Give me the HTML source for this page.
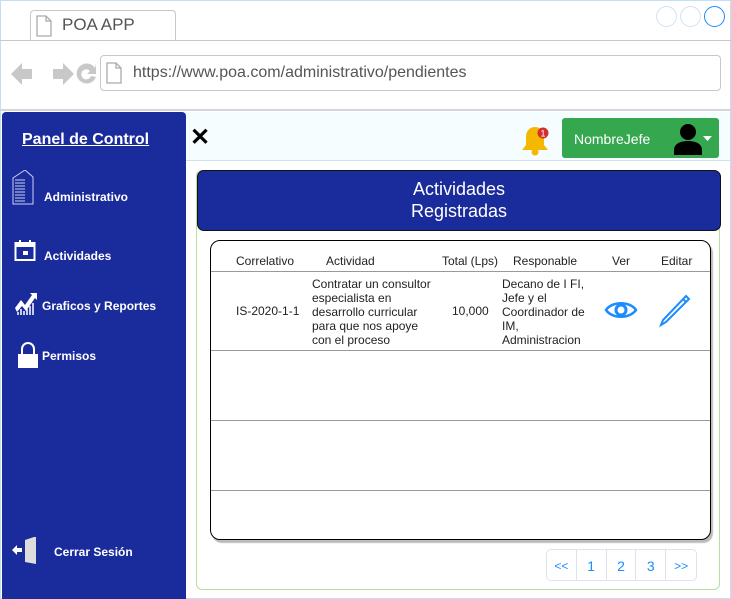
<!DOCTYPE html>
<html><head><meta charset="utf-8"><style>
*{margin:0;padding:0;box-sizing:border-box}
body{width:731px;height:599px;position:relative;background:#fff;font-family:"Liberation Sans",sans-serif;overflow:hidden}
.a{position:absolute}
.frame{left:0;top:0;width:731px;height:599px;border:1px solid #bfe0f5}
.side{left:2px;top:112px;width:184px;height:487px;background:#1a2b9b;border-radius:4px 4px 0 0}
.nav{color:#fff;font-weight:bold;font-size:12px}
.c{font-size:12px;color:#222}
</style></head><body>
<div class="a frame"></div>
<div class="a" style="left:30px;top:10px;width:146px;height:31px;border:1px solid #c8c8c8;border-bottom:none;border-radius:4px 4px 0 0;background:#fff"></div>
<div class="a" style="left:0;top:40px;width:731px;height:1px;background:#c8c8c8"></div>
<svg class="a" style="left:36px;top:15px" width="16" height="22"><path d="M1 1h9l5 5v15H1z M10 1v5h5" fill="#fff" stroke="#aaa" stroke-width="1.3"/></svg>
<div class="a" style="left:62px;top:15px;font-size:17px;color:#555">POA APP</div>
<div class="a" style="left:656px;top:6px;width:21px;height:21px;border:1px solid #cfe3f5;border-radius:50%"></div>
<div class="a" style="left:680px;top:6px;width:21px;height:21px;border:1px solid #cfe3f5;border-radius:50%"></div>
<div class="a" style="left:704px;top:6px;width:21px;height:21px;border:1.5px solid #1a8cff;border-radius:50%"></div>
<svg class="a" style="left:10px;top:60px" width="88" height="28"><path d="M1 14L12 3v6h10v10H12v6z" fill="#c8c8c8"/><path d="M64 14L53 3v6H43v10h10v6z" fill="#c8c8c8"/><path d="M85 8a10 10 0 1 0 1 9l-5-1a5 5 0 1 1-1-5l-3 3h9V4z" fill="#c8c8c8"/></svg>
<div class="a" style="left:100px;top:55px;width:621px;height:36px;border:1px solid #c8c8c8;border-radius:4px"></div>
<svg class="a" style="left:106px;top:62px" width="16" height="22"><path d="M1 1h9l5 5v15H1z M10 1v5h5" fill="#fff" stroke="#aaa" stroke-width="1.3"/></svg>
<div class="a" style="left:133px;top:64px;font-size:16px;color:#555">https://www.poa.com/administrativo/pendientes</div>
<div class="a" style="left:0;top:109px;width:731px;height:2px;background:#d0d6dc"></div>
<div class="a" style="left:186px;top:112px;width:544px;height:49px;background:#f5fdff;border-bottom:1px solid #c8e4f5"></div>
<div class="a" style="left:190px;top:125px;font-size:24px;font-weight:bold;line-height:26px">✕</div>
<svg class="a" style="left:519px;top:123px" width="34" height="34"><path d="M16 4c-6 0-9 5-9 10v8l-4 5h26l-4-5v-8c0-5-3-10-9-10z" fill="#f5b800"/><circle cx="16" cy="29" r="3.5" fill="#f5b800"/><circle cx="24" cy="10" r="5.5" fill="#d32f2f"/><text x="21.5" y="13.5" font-size="9" fill="#fff" font-family="Liberation Sans">1</text></svg>
<div class="a" style="left:562px;top:118px;width:157px;height:40px;background:#35a84f;border-radius:3px"></div>
<div class="a" style="left:574px;top:131px;color:#fff;font-size:14px">NombreJefe</div>
<svg class="a" style="left:672px;top:123px" width="44" height="32"><circle cx="16" cy="9" r="8" fill="#000"/><path d="M2 32v-5c0-6 6-9 14-9s14 3 14 9v5z" fill="#000"/><path d="M31 13h9l-4.5 5z" fill="#fff"/></svg>
<div class="a side"></div>
<div class="a" style="left:22px;top:131px;color:#fff;font-weight:bold;font-size:16px;text-decoration:underline">Panel de Control</div>
<svg class="a" style="left:11px;top:170px" width="24" height="36"><path d="M2 34V8l12-8 8 7v27z" fill="none" stroke="#c9d1f0" stroke-width="1"/><g stroke="#c9d1f0"><path d="M4 10h10M4 13h10M4 16h10M4 19h10M4 22h10M4 25h10M4 28h10M4 31h10"/></g></svg>
<div class="a nav" style="left:44px;top:190px">Administrativo</div>
<svg class="a" style="left:14px;top:239px" width="22" height="22"><rect x="1.5" y="4" width="19" height="17" fill="none" stroke="#fff" stroke-width="2"/><rect x="1.5" y="4" width="19" height="4" fill="#fff"/><path d="M6 1v5M16 1v5" stroke="#fff" stroke-width="2"/><rect x="9" y="12" width="5" height="4" fill="#fff"/></svg>
<div class="a nav" style="left:44px;top:249px">Actividades</div>
<svg class="a" style="left:14px;top:290px" width="24" height="26"><path d="M1 18l6-8 4 5 7-10-2-2h7v7l-2-2-9 13-4-5-5 6z" fill="#fff"/><path d="M4 25v-3M7 25v-6M10 25v-4M13 25v-6M16 25v-9M19 25v-12" stroke="#fff" stroke-width="1.5"/></svg>
<div class="a nav" style="left:42px;top:299px">Graficos y Reportes</div>
<svg class="a" style="left:17px;top:341px" width="22" height="28"><path d="M5 13V8a6 6 0 0 1 12 0v5" fill="none" stroke="#fff" stroke-width="2"/><rect x="1" y="13" width="20" height="14" fill="#fff"/></svg>
<div class="a nav" style="left:42px;top:349px">Permisos</div>
<svg class="a" style="left:10px;top:537px" width="30" height="28"><path d="M15 3l9-3h2v27l-11-2z" fill="#ddd"/><path d="M2 13l5-5v3h5v4H7v3z" fill="#fff"/></svg>
<div class="a nav" style="left:54px;top:545px">Cerrar Sesión</div>
<div class="a" style="left:196px;top:170px;width:524px;height:420px;border:1px solid #b7df9b;border-radius:6px"></div>
<div class="a" style="left:197px;top:170px;width:524px;height:61px;background:#1a2b9b;border:1px solid #111;border-radius:7px;color:#fff;text-align:center;font-size:18px;line-height:22px;padding-top:7px">Actividades<br>Registradas</div>
<div class="a" style="left:210px;top:240px;width:501px;height:300px;border:1px solid #000;border-radius:10px;box-shadow:2px 3px 1px #bbb;background:#fff"></div>
<div class="a" style="left:211px;top:271px;width:499px;height:1px;background:#999"></div>
<div class="a" style="left:211px;top:350px;width:499px;height:1px;background:#999"></div>
<div class="a" style="left:211px;top:420px;width:499px;height:1px;background:#999"></div>
<div class="a" style="left:211px;top:490px;width:499px;height:1px;background:#999"></div>
<div class="a c" style="left:236px;top:254px">Correlativo</div>
<div class="a c" style="left:326px;top:254px">Actividad</div>
<div class="a c" style="left:442px;top:254px">Total (Lps)</div>
<div class="a c" style="left:513px;top:254px">Responable</div>
<div class="a c" style="left:612px;top:254px">Ver</div>
<div class="a c" style="left:661px;top:254px">Editar</div>
<div class="a c" style="left:236px;top:304px">IS-2020-1-1</div>
<div class="a c" style="left:312px;top:277px;line-height:14px">Contratar un consultor<br>especialista en<br>desarrollo curricular<br>para que nos apoye<br>con el proceso</div>
<div class="a c" style="left:452px;top:304px">10,000</div>
<div class="a c" style="left:502px;top:277px;line-height:14px">Decano de I FI,<br>Jefe y el<br>Coordinador de<br>IM,<br>Administracion</div>
<svg class="a" style="left:604px;top:299px" width="34" height="22"><path d="M2 11C8 2 26 2 32 11 26 20 8 20 2 11z" fill="none" stroke="#1a8cff" stroke-width="2.5"/><circle cx="17" cy="11" r="5" fill="none" stroke="#1a8cff" stroke-width="3"/></svg>
<svg class="a" style="left:658px;top:292px" width="34" height="36"><path d="M28 4l3 3L8 30l-5 3 2-5z" fill="none" stroke="#1a8cff" stroke-width="2"/><path d="M25 7l3 3" stroke="#1a8cff" stroke-width="2"/></svg>
<div class="a" style="left:546px;top:549px;width:151px;height:32px;border:1px solid #dde3ea;border-radius:5px;display:flex;color:#1a8cff;font-size:14px">
<div style="width:30px;border-right:1px solid #dde3ea;text-align:center;line-height:32px;font-size:12px">&lt;&lt;</div>
<div style="width:30px;border-right:1px solid #dde3ea;text-align:center;line-height:32px">1</div>
<div style="width:30px;border-right:1px solid #dde3ea;text-align:center;line-height:32px">2</div>
<div style="width:30px;border-right:1px solid #dde3ea;text-align:center;line-height:32px">3</div>
<div style="width:30px;text-align:center;line-height:32px;font-size:12px">&gt;&gt;</div>
</div>
</body></html>
